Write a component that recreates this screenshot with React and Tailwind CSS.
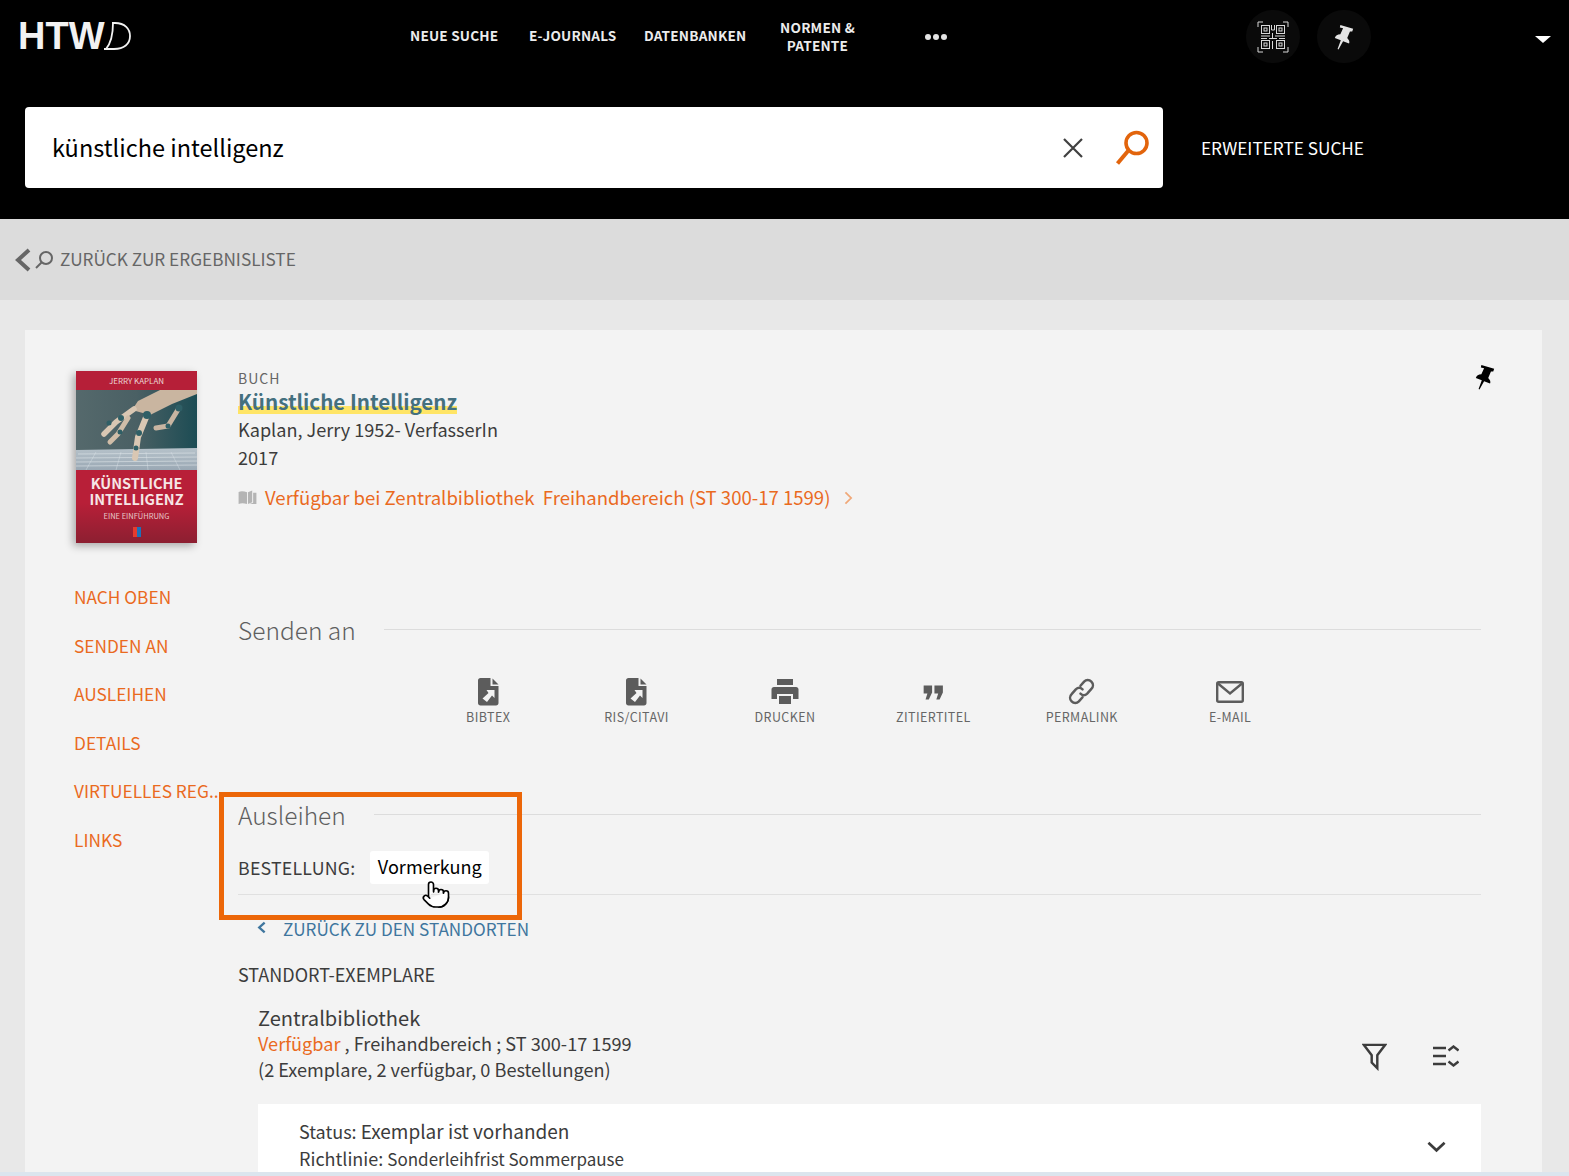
import { Pointer } from "lucide-react";

const sideLinks = ["NACH OBEN", "SENDEN AN", "AUSLEIHEN", "DETAILS", "VIRTUELLES REG...", "LINKS"];

const PinIcon = ({ className }) => (
  <svg viewBox="0 0 24 28" className={className} fill="currentColor">
    <path d="M8 1 L22 5 L21 8 L18.5 8 L15.5 15 C17.5 17 18.5 19 17.5 21 L11 18.5 L6 27.5 L5 27 L8.5 17.5 L2 15 C2.5 12.5 5 11 8 11 L11 4.5 L7.5 3.5 Z" />
  </svg>
);

const FileIcon = () => (
  <svg viewBox="0 0 22 28" className="w-[23px] h-[28px]" fill="#5c5c5c">
    <path d="M3 0 H13 V8 H21 V25 C21 26.5 20 27.5 18.5 27.5 H3 C1.5 27.5 0.5 26.5 0.5 25 V2.5 C0.5 1 1.5 0 3 0 Z" />
    <path d="M15 0.5 L21 6.5 H15 Z" />
    <path d="M9 12 H17 V20 L14.5 17.5 L9.5 24 L5 20.5 L11 15 Z" fill="#f3f3f3" />
  </svg>
);

const PrintIcon = () => (
  <svg viewBox="0 0 28 26" className="w-[28px] h-[26px]" fill="#5c5c5c">
    <path d="M6 0 H22 V6 H6 Z" />
    <path d="M3 8 H25 C26.5 8 27.5 9 27.5 10.5 V20 H22 V15 H6 V20 H0.5 V10.5 C0.5 9 1.5 8 3 8 Z" />
    <path d="M8 17 H20 V25 H8 Z" />
  </svg>
);

const QuoteIcon = () => (
  <svg viewBox="0 0 22 16" className="w-[21px] h-[15px]" fill="#5c5c5c">
    <path d="M0.5 0.5 H9.5 V8 L6 15.5 H2.5 L4.5 9 H0.5 Z" />
    <path d="M12 0.5 H21 V8 L17.5 15.5 H14 L16 9 H12 Z" />
  </svg>
);

const LinkIcon = () => (
  <svg viewBox="0 0 26 26" className="w-[27px] h-[27px] -mt-[2px]" fill="none" stroke="#5c5c5c" strokeWidth="2.4" strokeLinecap="round">
    <path d="M12 7.5 L15.5 3.5 C17.5 1.5 20.5 1.5 22.5 3.5 C24.5 5.5 24.5 8.5 22.5 10.5 L18.5 15 C16.5 17 14 17 12 15" />
    <path d="M14 18.5 L10.5 22.5 C8.5 24.5 5.5 24.5 3.5 22.5 C1.5 20.5 1.5 17.5 3.5 15.5 L7.5 11 C9.5 9 12 9 14 11" />
  </svg>
);

const MailIcon = () => (
  <svg viewBox="0 0 28 22" className="w-[28px] h-[22px]" fill="none" stroke="#5c5c5c" strokeWidth="2.4">
    <rect x="1.2" y="1.2" width="25.6" height="19.6" rx="1.5" />
    <path d="M2 2.5 L14 12.5 L26 2.5" />
  </svg>
);

const sendItems = [
  { label: "BIBTEX", icon: <FileIcon /> },
  { label: "RIS/CITAVI", icon: <FileIcon /> },
  { label: "DRUCKEN", icon: <PrintIcon /> },
  { label: "ZITIERTITEL", icon: <QuoteIcon /> },
  { label: "PERMALINK", icon: <LinkIcon /> },
  { label: "E-MAIL", icon: <MailIcon /> },
];

const QrIcon = () => (
  <svg viewBox="0 0 32 32" className="w-[32px] h-[32px]" fill="none" stroke="#d8d8d8" strokeWidth="1">
    <path d="M1 6 V1 H6 M26 1 H31 V6 M31 26 V31 H26 M6 31 H1 V26" />
    <rect x="4.5" y="4.5" width="8" height="8" />
    <rect x="7" y="7" width="3" height="3" />
    <rect x="19.5" y="4.5" width="8" height="8" />
    <rect x="22" y="7" width="3" height="3" />
    <rect x="4.5" y="19.5" width="8" height="8" />
    <rect x="7" y="22" width="3" height="3" />
    <rect x="19.5" y="19.5" width="8" height="8" />
    <rect x="22" y="22" width="3" height="3" />
    <path d="M14.5 4 V9 H17.5 V4 M4 15 H13 M15.5 12 V18 M18 15 H28 M4 17.5 H10 M12 17.5 H20 M22 17.5 H28 M15.5 20 V28" />
  </svg>
);

const BookCover = () => (
  <div className="w-[121px] h-[172px] flex flex-col shadow-[-3px_3px_8px_rgba(0,0,0,0.3)] bg-[#b61f38] shrink-0">
    <div className="h-[19px] flex items-center justify-center text-[8px] text-[#ecd5d5] leading-none">
      JERRY KAPLAN
    </div>
    <svg viewBox="0 0 121 80" className="w-[121px] h-[80px] block">
      <defs>
        <linearGradient id="coverBg" x1="0" y1="0" x2="1" y2="0">
          <stop offset="0" stopColor="#55696c" />
          <stop offset="0.5" stopColor="#4a6064" />
          <stop offset="1" stopColor="#1c4c54" />
        </linearGradient>
        <linearGradient id="keys" x1="0" y1="0" x2="0" y2="1">
          <stop offset="0" stopColor="#b6c2ca" />
          <stop offset="1" stopColor="#9aa8b4" />
        </linearGradient>
      </defs>
      <rect width="121" height="80" fill="url(#coverBg)" />
      <path d="M0 60 L121 58 V80 H0 Z" fill="url(#keys)" />
      <path d="M2 64 L119 63 M0 68 L121 67 M0 72 L121 71 M0 76 L121 75" stroke="#dfe6ea" strokeWidth="0.6" />
      <path d="M20 62 L10 80 M45 62 L40 80 M70 62 L72 80 M95 62 L104 80" stroke="#dfe6ea" strokeWidth="0.4" />
      <path d="M84 0 H121 V4 L96 14 L74 25 L56 20 L62 11 Z" fill="#c9b5a0" />
      <path d="M71 25 L62 47 L59 68" stroke="#d9c7b3" strokeWidth="6" strokeLinecap="round" fill="none" />
      <path d="M58 19 L40 32 L28 44" stroke="#d9c7b3" strokeWidth="5.5" strokeLinecap="round" fill="none" />
      <path d="M52 28 L42 44 L34 52" stroke="#d0bda8" strokeWidth="5" strokeLinecap="round" fill="none" />
      <path d="M103 18 L92 36 L80 38" stroke="#c8b5a2" strokeWidth="5" strokeLinecap="round" fill="none" />
      <circle cx="71" cy="25" r="4" fill="#2f5f66" />
      <circle cx="63" cy="43" r="3" fill="#2f5f66" />
      <circle cx="60" cy="58" r="2.5" fill="#2f5f66" />
      <circle cx="45" cy="28" r="3" fill="#2f5f66" />
      <circle cx="33" cy="33" r="2.5" fill="#2f5f66" />
      <circle cx="44" cy="42" r="2.5" fill="#2f5f66" />
      <circle cx="103" cy="18" r="3.5" fill="#2f5f66" />
      <circle cx="92" cy="36" r="2.5" fill="#2f5f66" />
    </svg>
    <div className="flex-1 flex flex-col items-center pt-[5px] bg-[linear-gradient(180deg,#b81f38_45%,#8c1f31_100%)]">
      <div className="text-[14.5px] leading-[16px] font-semibold text-[#f6e6e6] text-center">
        KÜNSTLICHE<br />INTELLIGENZ
      </div>
      <div className="text-[7.5px] leading-none mt-[5px] text-[#e8c8c8]">
        EINE EINFÜHRUNG
      </div>
      <div className="w-[8px] h-[10px] mt-[7px] bg-[linear-gradient(90deg,#e63b2e_50%,#1d71b8_50%)]"></div>
    </div>
  </div>
);

const SectionTitle = ({ children }) => (
  <div className="flex items-center">
    <span className="text-[24.5px] leading-[34px] font-light text-[#5f5f5f] pr-[28px]">{children}</span>
    <div className="flex-1 h-px bg-[#dcdcdc] -mt-[2px]"></div>
  </div>
);

export default function App() {
  return (
    <div className="relative w-[1569px] h-[1176px] overflow-hidden bg-[#e8e8e8] font-['Noto_Sans_CJK_SC','Source_Sans_Pro',sans-serif] text-[#3c3c3c]">
      {/* header */}
      <header className="h-[219px] bg-black text-white flex flex-col">
        <div className="h-[107px] flex items-start">
          <div className="w-[410px] pl-[18px] pt-[15px] flex items-start shrink-0">
            <span className="font-['Liberation_Sans',sans-serif] font-bold text-[38px] leading-[42px] text-[#f2f2f2]">HTW</span>
            <svg viewBox="0 0 36 30" className="w-[36px] h-[30px] -ml-[9px] mt-[6px]" fill="none" stroke="#f2f2f2" strokeWidth="1.8">
              <path d="M16 2 H19 C29 2 34 8 34 15 C34 23 28 28 18 28 H8" />
              <path d="M17 2 C17 12 15 22 10 28" />
            </svg>
          </div>
          <nav className="flex items-center h-[71px] text-[13.6px] font-semibold tracking-[0.2px] text-[#ececec] whitespace-nowrap">
            <span className="w-[119px]">NEUE SUCHE</span>
            <span className="w-[115px]">E-JOURNALS</span>
            <span className="w-[136px]">DATENBANKEN</span>
            <span className="w-[75px] text-center leading-[18px]">NORMEN &amp;<br />PATENTE</span>
            <span className="ml-[70px] flex gap-[2px] mt-[3px]">
              <i className="w-[6px] h-[6px] rounded-full bg-[#e4e4e4]"></i>
              <i className="w-[6px] h-[6px] rounded-full bg-[#e4e4e4]"></i>
              <i className="w-[6px] h-[6px] rounded-full bg-[#e4e4e4]"></i>
            </span>
          </nav>
          <div className="ml-[299px] mt-[10px] w-[54px] h-[53px] rounded-full bg-[#0a0a0a] flex items-center justify-center">
            <QrIcon />
          </div>
          <div className="ml-[17px] mt-[10px] w-[54px] h-[53px] rounded-full bg-[#0a0a0a] flex items-center justify-center text-[#e4e4e4]">
            <PinIcon className="w-[22px] h-[26px]" />
          </div>
          <div className="ml-[164px] mt-[36px] w-0 h-0 border-x-[8px] border-x-transparent border-t-[7px] border-t-white"></div>
        </div>
        <div className="flex items-center pl-[25px]">
          <div className="w-[1138px] h-[81px] bg-white rounded-[4px] flex items-center pl-[27px]">
            <span className="flex-1 text-[23.5px] leading-none text-black">künstliche intelligenz</span>
            <svg viewBox="0 0 20 20" className="w-[20px] h-[20px] mr-[32px]" fill="none" stroke="#404040" strokeWidth="2.2">
              <path d="M1 1 L19 19 M19 1 L1 19" />
            </svg>
            <svg viewBox="0 0 34 36" className="w-[34px] h-[36px] mr-[14px]" fill="none" stroke="#e2640c" strokeWidth="3.6">
              <circle cx="21.5" cy="13" r="10.5" />
              <path d="M13 21 L2.5 33.5" strokeWidth="4" />
            </svg>
          </div>
          <span className="ml-[38px] text-[17.2px] text-white">ERWEITERTE SUCHE</span>
        </div>
      </header>

      {/* back bar */}
      <div className="h-[81px] bg-[#dcdcdc] flex items-center pl-[15px] text-[#666666]">
        <svg viewBox="0 0 16 24" className="w-[16px] h-[24px]" fill="none" stroke="#666666" strokeWidth="4">
          <path d="M14 2 L3 12 L14 22" />
        </svg>
        <svg viewBox="0 0 20 20" className="w-[20px] h-[20px] ml-[3px]" fill="none" stroke="#666666" strokeWidth="2">
          <circle cx="12" cy="8" r="6" />
          <path d="M7.5 12.5 L2 18" />
        </svg>
        <span className="ml-[6px] -mt-[1px] text-[17.2px]">ZURÜCK ZUR ERGEBNISLISTE</span>
      </div>

      {/* card */}
      <main className="ml-[25px] mt-[30px] w-[1517px] h-[842px] bg-[#f3f3f3] flex overflow-hidden">
        <aside className="w-[213px] shrink-0 pl-[49px] pt-[41px]">
          <div className="ml-[2px]"><BookCover /></div>
          <ul className="mt-[36px] text-[17.3px] text-[#ea6a1e] flex flex-col">
            {sideLinks.map((l) => (
              <li key={l} className="h-[48.5px] leading-[36px] whitespace-nowrap">{l}</li>
            ))}
          </ul>
        </aside>

        <section className="w-[1243px] pt-[38px] relative">
          <div className="text-[14px] leading-[20px] tracking-[1px] text-[#666666]">BUCH</div>
          <div className="text-[20.6px] leading-[28px] -mt-[1px] font-semibold text-[#44707f]">
            <span className="bg-[linear-gradient(180deg,transparent_72%,#ffe566_72%)] inline-block h-[27px]">Künstliche Intelligenz</span>
          </div>
          <div className="text-[18.1px] leading-[28px]">Kaplan, Jerry 1952- VerfasserIn</div>
          <div className="text-[18.1px] leading-[28px]">2017</div>
          <div className="flex items-center mt-[12px] text-[18.57px] leading-[28px] text-[#ea6a1e]">
            <svg viewBox="0 0 20 16" className="w-[19px] h-[15px] mr-[8px]" fill="#b4b4b4">
              <path d="M0.5 2 C3 1 6 1 9.5 2.5 V15 C6 14 3 14 0.5 15 Z" />
              <path d="M10.5 2.5 L15 0.5 V13 L10.5 15 Z" />
              <path d="M16 3 H19.5 V15 H12 L16 13.5 Z" />
            </svg>
            <span>Verfügbar bei Zentralbibliothek&nbsp; Freihandbereich (ST 300-17 1599)</span>
            <svg viewBox="0 0 10 16" className="w-[9px] h-[14px] ml-[14px] mt-[2px]" fill="none" stroke="#f0a878" strokeWidth="2">
              <path d="M1.5 1.5 L8 8 L1.5 14.5" />
            </svg>
          </div>

          <div className="mt-[102px]"><SectionTitle>Senden an</SectionTitle></div>

          <div className="flex mt-[30px] ml-[176px]">
            {sendItems.map((s) => (
              <div key={s.label} className="w-[148.4px] h-[48px] flex flex-col items-center justify-between">
                <div className="h-[30px] flex items-center justify-center">{s.icon}</div>
                <span className="text-[12.5px] leading-[16px] tracking-[0.4px] text-[#666666]">{s.label}</span>
              </div>
            ))}
          </div>

          <div className="mt-[73px]"><SectionTitle>Ausleihen</SectionTitle></div>

          <div className="flex items-center mt-[19px] h-[33px]">
            <span className="text-[17.8px] tracking-[0.2px]">BESTELLUNG:</span>
            <span className="ml-[15px] h-[33px] px-[7.5px] bg-white rounded-[3px] text-[18.1px] leading-[31px] text-black">Vormerkung</span>
          </div>
          <div className="h-px bg-[#e0e0e0] mt-[10px]"></div>

          <div className="flex items-center mt-[24px] ml-[19px] h-[20px] text-[17.15px] text-[#3f769e]">
            <svg viewBox="0 0 10 14" className="w-[9px] h-[13px] -mt-[3px]" fill="none" stroke="#3f769e" strokeWidth="2.6">
              <path d="M8.5 1.5 L2.5 7 L8.5 12.5" />
            </svg>
            <span className="ml-[17px]">ZURÜCK ZU DEN STANDORTEN</span>
          </div>

          <div className="text-[18px] leading-[24px] mt-[23px]">STANDORT-EXEMPLARE</div>

          <div className="ml-[20px] flex mt-[17px]">
            <div className="flex-1">
              <div className="text-[20.1px] leading-[30px]">Zentralbibliothek</div>
              <div className="text-[18.15px] leading-[26px] -mt-[3px]"><span className="text-[#ea6a1e]">Verfügbar</span> , Freihandbereich ; ST 300-17 1599</div>
              <div className="text-[18.15px] leading-[26px]">(2 Exemplare, 2 verfügbar, 0 Bestellungen)</div>
            </div>
            <div className="flex items-start pt-[38px]">
              <svg viewBox="0 0 26 30" className="w-[25px] h-[28px] mt-[2px]" fill="none" stroke="#3c3c3c" strokeWidth="2.6">
                <path d="M1.5 2 H24.5 L16 13 V27 L10 21 V13 Z" />
              </svg>
              <svg viewBox="0 0 26 22" className="w-[26px] h-[22px] ml-[46px] mr-[22px] mt-[4px]" fill="none" stroke="#3c3c3c" strokeWidth="2.4">
                <path d="M0 3 H13 M0 11 H13 M0 19 H13" />
                <path d="M15.5 5.5 L20.5 1.5 L25.5 5.5 M15.5 16.5 L20.5 20.5 L25.5 16.5" />
              </svg>
            </div>
          </div>

          <div className="ml-[20px] mt-[22px] bg-white h-[120px] pl-[41px] pt-[13px] relative">
            <div className="text-[18px] leading-[28px]">Status: <span className="text-[19px]">Exemplar ist vorhanden</span></div>
            <div className="text-[18px] leading-[26px]">Richtlinie: <span className="text-[17px]">Sonderleihfrist Sommerpause</span></div>
            <svg viewBox="0 0 20 12" className="absolute right-[35px] top-[37px] w-[19px] h-[12px]" fill="none" stroke="#3c3c3c" strokeWidth="2.8">
              <path d="M1.5 1.5 L10 9.5 L18.5 1.5" />
            </svg>
          </div>

          <PinIcon className="absolute top-[34px] right-[-15px] w-[22px] h-[26px] text-black" />
        </section>
      </main>

      {/* bottom strip of the next panel */}
      <div className="absolute left-0 bottom-0 w-full h-[4px] bg-[#dbe5ee]"></div>

      {/* highlight drawn over the screenshot */}
      <div className="absolute left-[219px] top-[792px] w-[303px] h-[128px] border-[5px] border-[#ec6608]"></div>
      <Pointer className="absolute left-[421px] top-[877px] w-[30px] h-[35px] text-black" fill="white" strokeWidth={1.3} />
    </div>
  );
}
